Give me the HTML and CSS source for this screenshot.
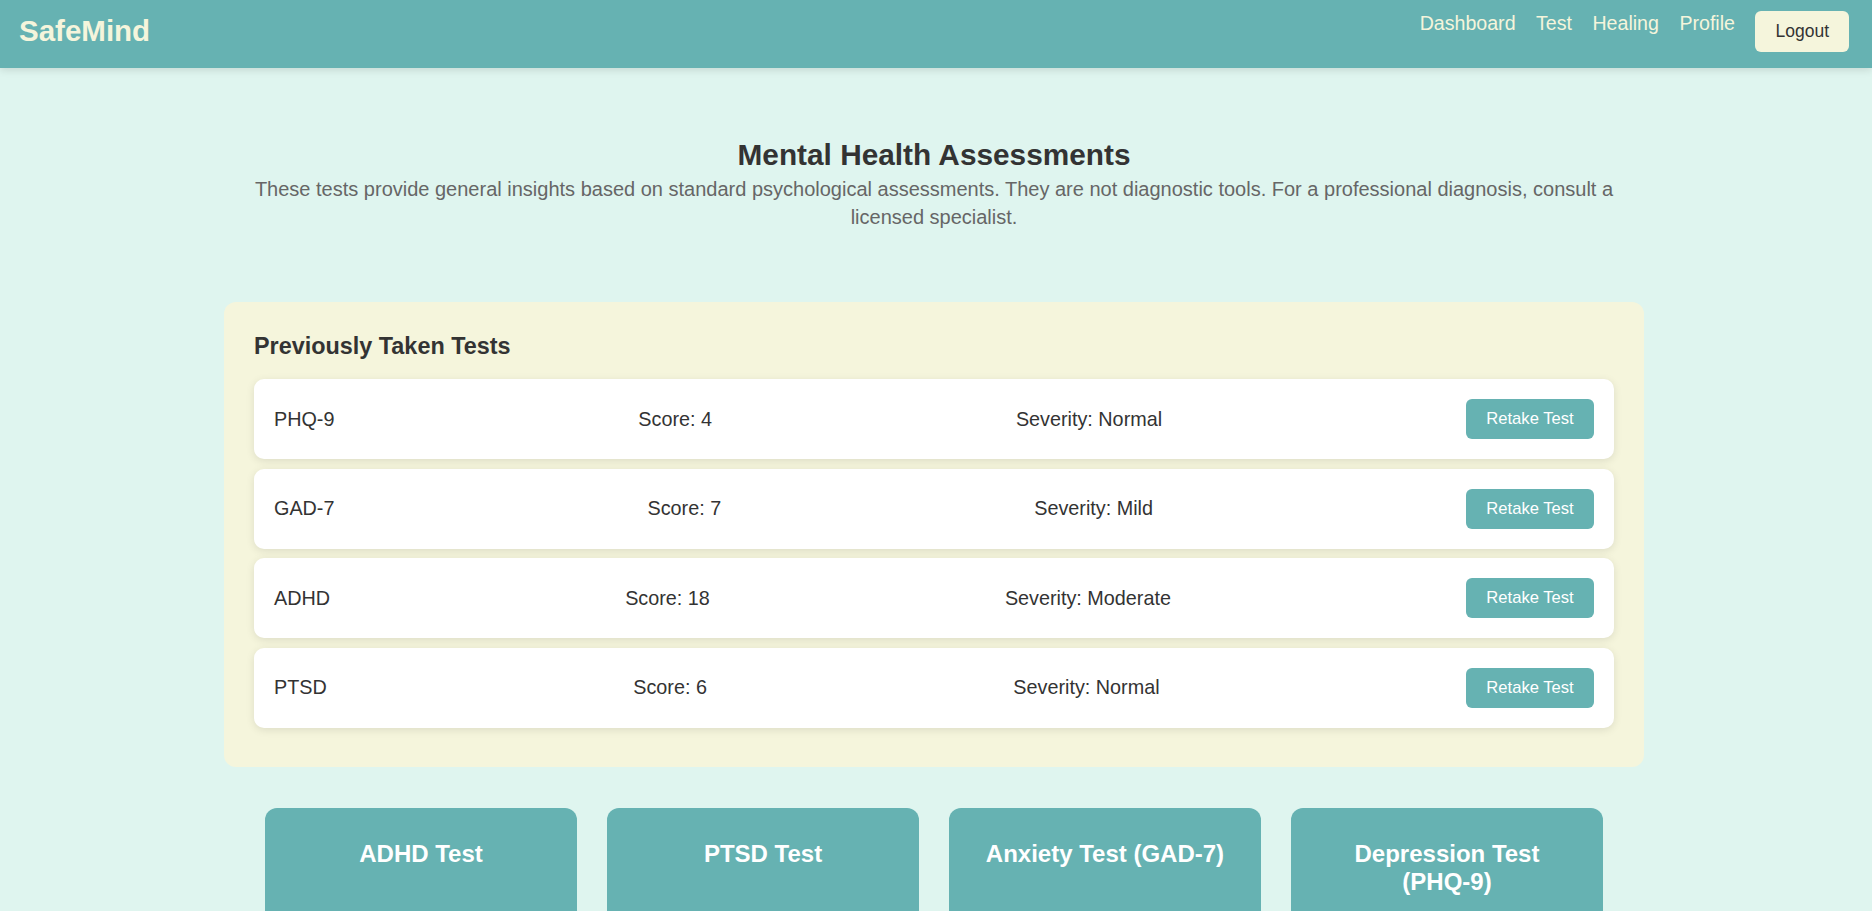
FILE: index.html
```html
<!DOCTYPE html>
<html lang="en">
<head>
<meta charset="utf-8">
<title>SafeMind - Tests</title>
<link rel="stylesheet" href="styles.css">
</head>
<body>
<header class="navbar">
  <div class="logo">SafeMind</div>
  <nav class="nav">
    <a class="nav-link" href="#">Dashboard</a>
    <a class="nav-link" href="#">Test</a>
    <a class="nav-link" href="#">Healing</a>
    <a class="nav-link" href="#">Profile</a>
    <button class="logout">Logout</button>
  </nav>
</header>
<main class="container">
  <h2 class="page-title">Mental Health Assessments</h2>
  <p class="page-desc">These tests provide general insights based on standard psychological assessments. They are not diagnostic tools. For a professional diagnosis, consult a licensed specialist.</p>

  <section class="history">
    <h3 class="history-title">Previously Taken Tests</h3>
    <div class="row"><span>PHQ-9</span><span>Score: 4</span><span>Severity: Normal</span><button class="retake">Retake Test</button></div>
    <div class="row"><span>GAD-7</span><span>Score: 7</span><span>Severity: Mild</span><button class="retake">Retake Test</button></div>
    <div class="row"><span>ADHD</span><span>Score: 18</span><span>Severity: Moderate</span><button class="retake">Retake Test</button></div>
    <div class="row"><span>PTSD</span><span>Score: 6</span><span>Severity: Normal</span><button class="retake">Retake Test</button></div>
  </section>

  <section class="tests">
    <div class="test-card"><h3>ADHD Test</h3></div>
    <div class="test-card"><h3>PTSD Test</h3></div>
    <div class="test-card"><h3>Anxiety Test (GAD-7)</h3></div>
    <div class="test-card"><h3>Depression Test (PHQ-9)</h3></div>
  </section>
</main>
</body>
</html>
```

FILE: styles.css
```css
* { box-sizing: border-box; }

body {
  margin: 0;
  padding-right: 4px;
  background: #dff5ef;
  font-family: "Liberation Sans", Arial, sans-serif;
  color: #333;
}

.navbar {
  display: flex;
  justify-content: space-between;
  align-items: center;
  height: 68px;
  margin-right: -4px;
  padding: 0 23px 0 19px;
  background: #66b2b2;
  box-shadow: 0 2px 8px rgba(0, 0, 0, 0.12);
  position: relative;
}

.logo {
  font-size: 29.5px;
  font-weight: bold;
  color: #f5f5dc;
  margin-bottom: 6px;
}

.nav {
  display: flex;
  align-items: flex-start;
  gap: 20.5px;
  margin-bottom: 5px;
}

.nav-link {
  font-size: 19.6px;
  color: #f5f5dc;
  text-decoration: none;
  line-height: 22px;
  margin-top: 1px;
}

.logout {
  height: 41px;
  padding: 0 20px;
  border: none;
  border-radius: 6px;
  background: #f5f5dc;
  color: #333;
  font-family: "Liberation Sans", Arial, sans-serif;
  font-size: 17.5px;
}

.container {
  width: 1420px;
  margin: 0 auto;
}

.page-title {
  margin: 69.5px 0 3px;
  text-align: center;
  font-size: 29.8px;
  font-weight: bold;
  color: #333;
}

.page-desc {
  margin: 0;
  text-align: center;
  font-size: 20px;
  line-height: 28.6px;
  color: #666;
}

.history {
  margin-top: 70px;
  padding: 31px 30px 29px;
  background: #f5f5dc;
  border-radius: 12px;
}

.history-title {
  margin: 0 0 19.5px;
  font-size: 23.4px;
  font-weight: bold;
}

.row {
  display: flex;
  justify-content: space-between;
  align-items: center;
  height: 80px;
  padding: 0 20px;
  margin-bottom: 9.6px;
  background: #fff;
  border-radius: 10px;
  box-shadow: 0 2px 8px rgba(0, 0, 0, 0.1);
  font-size: 19.8px;
}

.retake {
  width: 128px;
  height: 40px;
  border: none;
  border-radius: 6px;
  background: #66b2b2;
  color: #fff;
  font-family: "Liberation Sans", Arial, sans-serif;
  font-size: 16.6px;
}

.tests {
  display: flex;
  justify-content: center;
  gap: 30px;
  margin-top: 41px;
}

.test-card {
  width: 312px;
  min-height: 200px;
  padding: 32px 28px;
  background: #66b2b2;
  border-radius: 12px;
  color: #fff;
  text-align: center;
}

.test-card h3 {
  margin: 0;
  font-size: 24px;
  font-weight: bold;
}
```
